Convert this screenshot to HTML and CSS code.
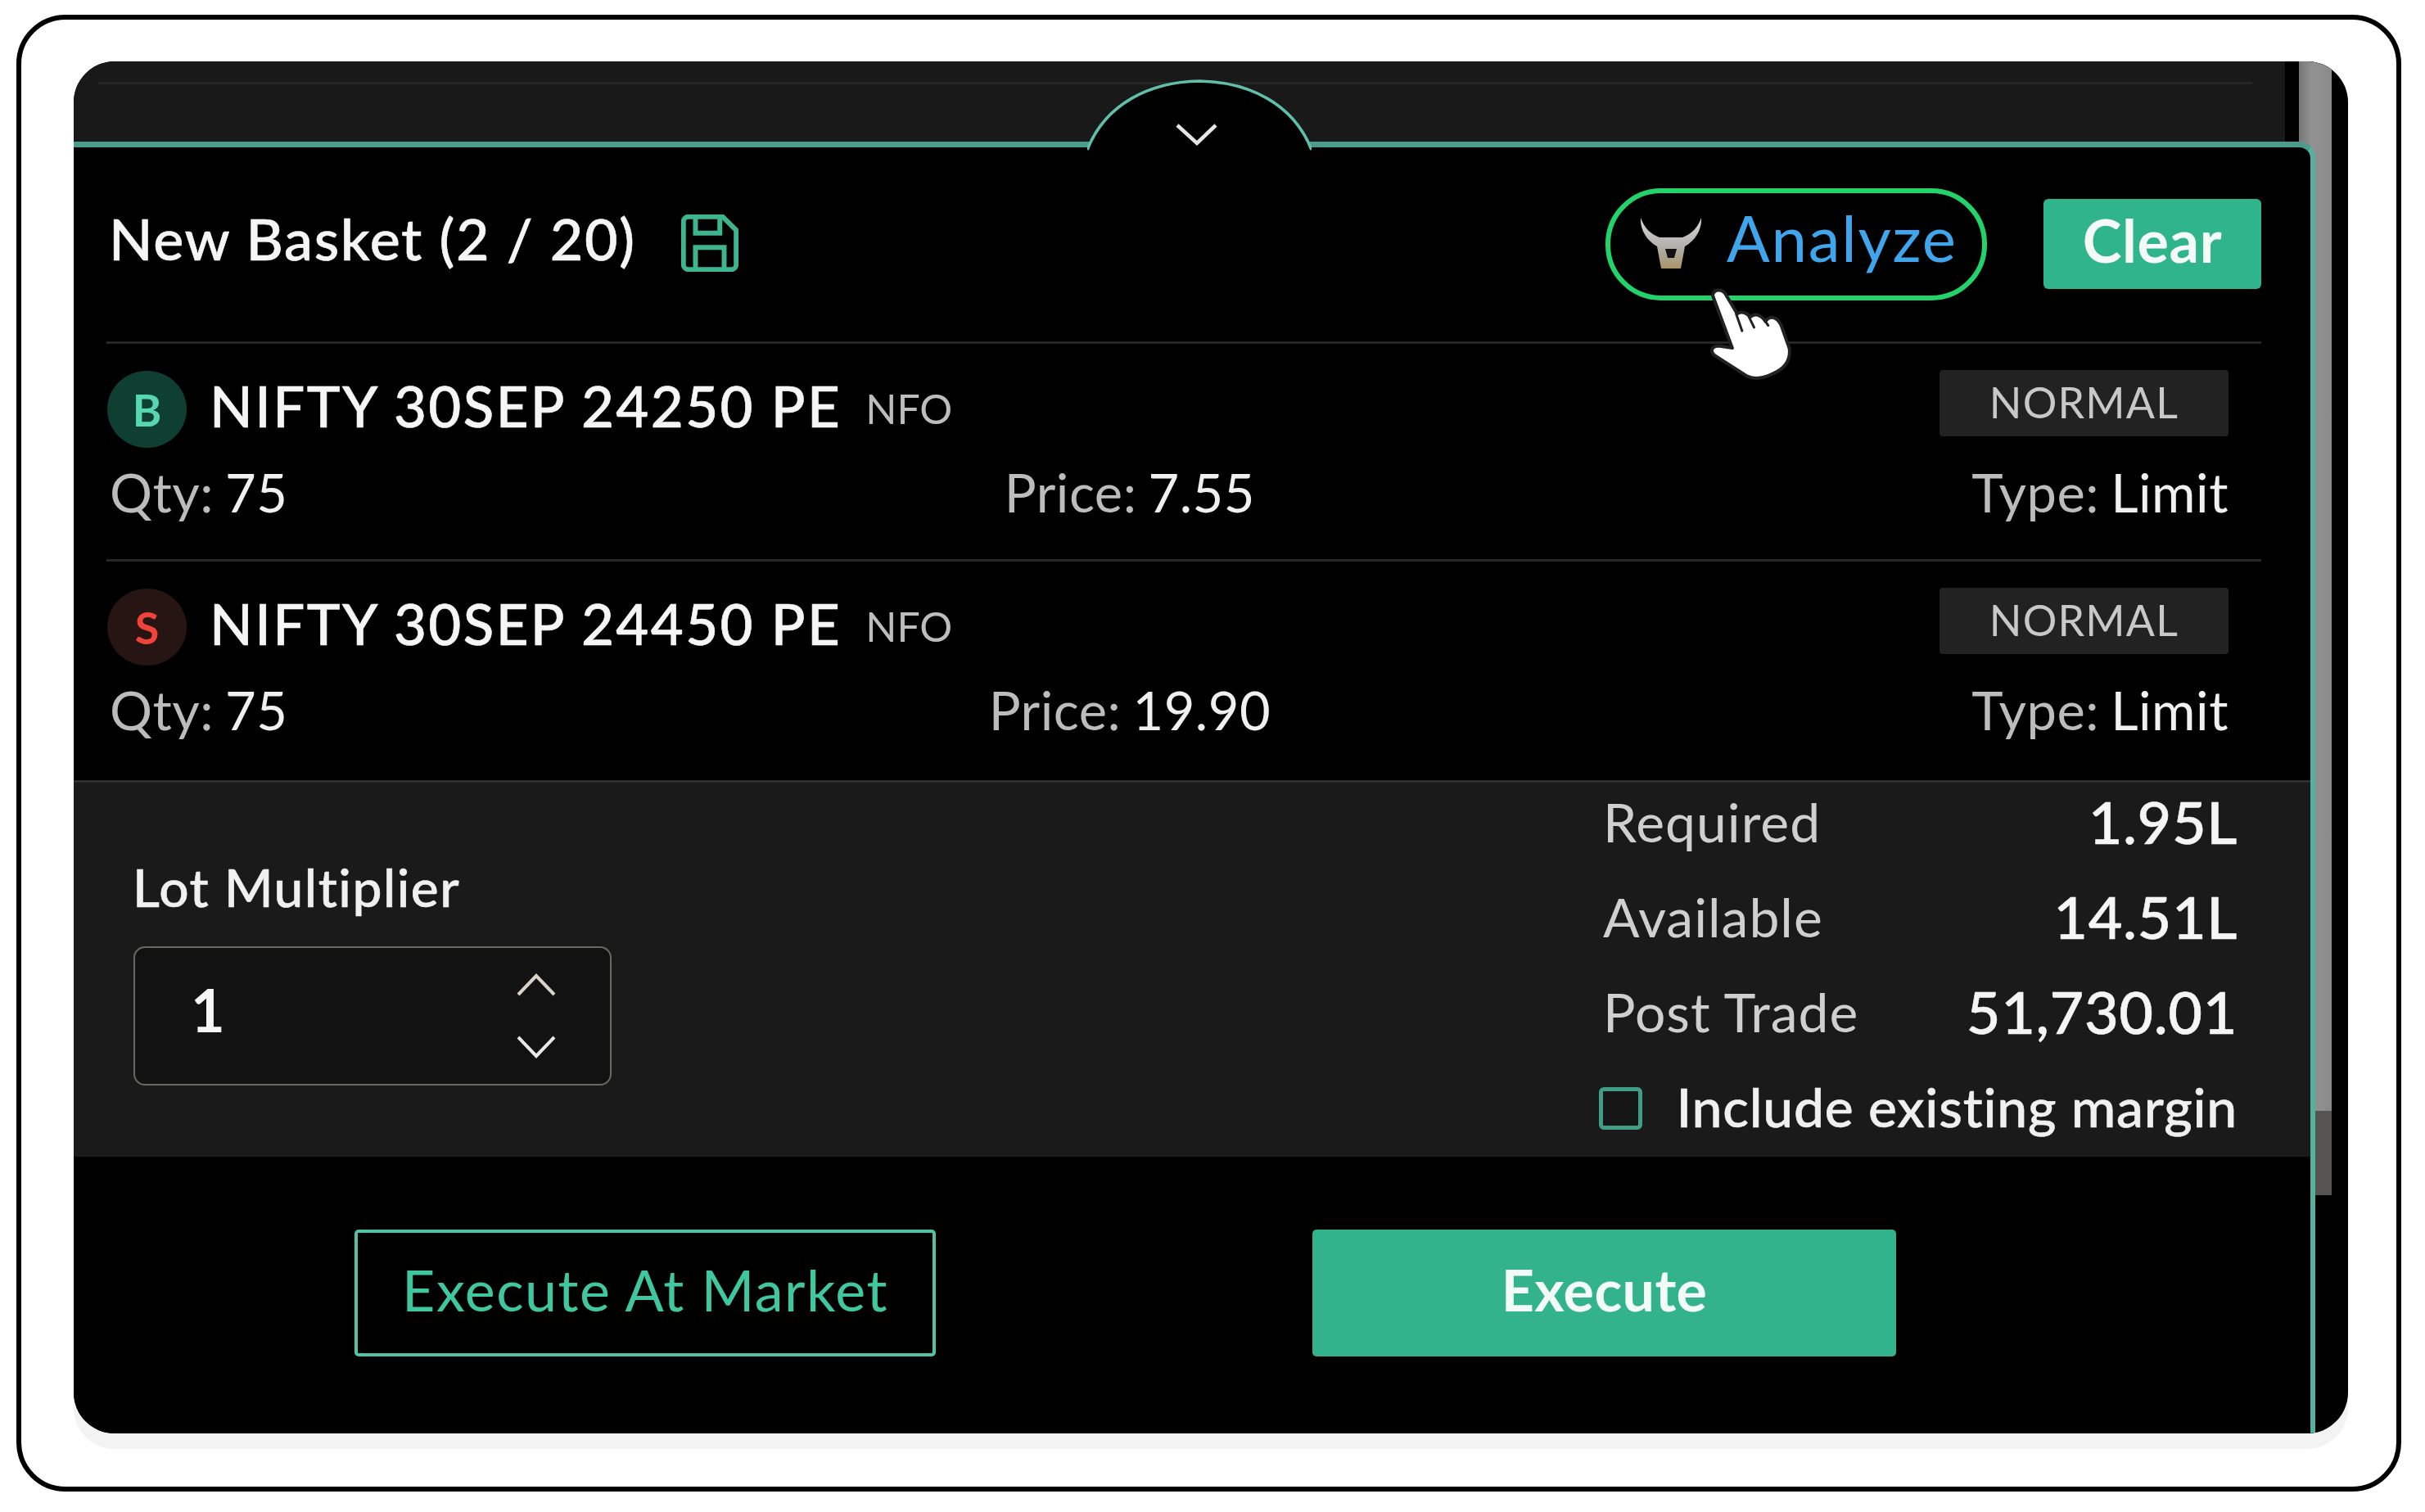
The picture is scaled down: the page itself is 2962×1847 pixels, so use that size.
FILE: index.html
```html
<!DOCTYPE html>
<html lang="en">

<head>
	<meta charset="UTF-8">
	<title>New Basket</title>
	<link rel="stylesheet" href="styles.css">
</head>

<body>
	<div class="frame">
		<div class="card">
			<div class="stage">
				<div class="strip"><div class="strip-line"></div></div>
				<div class="basket">
					<svg class="hump" viewBox="0 0 274 90" width="274" height="90">
						<path d="M0 84 C22 30 76 3 137 2 C198 3 252 30 274 84 V90 H0 Z" fill="#000" />
						<path d="M0 86 C22 30 76 3 137 2 C198 3 252 30 274 86" fill="none" stroke="#5fbfa9" stroke-width="3.5" />
						<path d="M110 56 L134 78 L157 56" fill="none" stroke="#e6e6e6" stroke-width="4.5" />
					</svg>
					<div class="list">
						<div class="head">
							<div class="head-left">
								<span class="title">New Basket (2 / 20)</span>
								<svg class="save" viewBox="2 2 20 20" width="70" height="70" fill="none" stroke="#3fb58f" stroke-width="1.7">
									<path d="M19.500 21.200H4.500a1.700 1.700 0 0 1-1.700-1.700V4.500a1.700 1.700 0 0 1 1.700-1.700H16.500l4.700 4.700v12a1.700 1.700 0 0 1-1.700 1.700z" />
									<path d="M17 21V13.500H7V21" />
									<path d="M7 3V8.500H15.500V3" />
								</svg>
							</div>
							<div class="head-right">
								<div class="pill">
									<svg class="bull" viewBox="0 0 76 64" width="76" height="64">
										<defs>
											<linearGradient id="bullfill" x1="0" y1="0" x2="0" y2="1">
												<stop offset="0" stop-color="#d8d8d6" />
												<stop offset="0.6" stop-color="#b0aeaa" />
												<stop offset="1" stop-color="#a89468" />
											</linearGradient>
										</defs>
										<path d="M1 0 C5 12 13 20 24 24 H52 C63 20 71 12 75 0 C76 14 68 28 55 35 L50 62 H26 L21 35 C8 28 0 14 1 0 Z" fill="url(#bullfill)" />
										<path d="M31 38 H45 L42 49 H34 Z" fill="#111" />
									</svg>
									<span class="analyze">Analyze</span>
									<svg class="hand" viewBox="380 390 310 350" width="103" height="117">
										<path d="M398 425 C400 402 432 398 445 420 L488 492 C505 482 525 488 535 505 C552 488 575 495 592 520 C610 495 635 505 650 535 L680 620 C685 665 660 695 620 712 C590 728 555 735 525 722 L405 645 C385 628 398 610 420 610 L470 618 Z" fill="#fff" stroke="#222" stroke-width="12" stroke-linejoin="round" />
										<path d="M484 492 L506 555 M532 505 L550 542 M590 518 L602 535" fill="none" stroke="#222" stroke-width="9" stroke-linecap="round" />
									</svg>
								</div>
								<div class="clear">Clear</div>
							</div>
						</div>

						<div class="order">
							<div class="order-top">
								<span class="side side-buy">B</span>
								<span class="symbol">NIFTY 30SEP 24250 PE</span>
								<span class="exchange">NFO</span>
								<span class="tag">NORMAL</span>
							</div>
							<div class="order-info">
								<span class="info">Qty: <b>75</b></span>
								<span class="info">Price: <b>7.55</b></span>
								<span class="info">Type: <b>Limit</b></span>
							</div>
						</div>

						<div class="order order-last">
							<div class="order-top">
								<span class="side side-sell">S</span>
								<span class="symbol">NIFTY 30SEP 24450 PE</span>
								<span class="exchange">NFO</span>
								<span class="tag">NORMAL</span>
							</div>
							<div class="order-info">
								<span class="info">Qty: <b>75</b></span>
								<span class="info">Price: <b>19.90</b></span>
								<span class="info">Type: <b>Limit</b></span>
							</div>
						</div>
					</div>

					<div class="summary">
						<div class="lots">
							<div class="lots-label">Lot Multiplier</div>
							<div class="stepper">
								<span class="stepper-value">1</span>
								<div class="stepper-arrows">
									<svg viewBox="0 0 48 28" width="48" height="28" fill="none" stroke="#d8d2c8" stroke-width="4"><path d="M2 26 L24 3 L46 26" /></svg>
									<svg viewBox="0 0 48 28" width="48" height="28" fill="none" stroke="#e8e8e8" stroke-width="4"><path d="M2 2 L24 25 L46 2" /></svg>
								</div>
							</div>
						</div>
						<div class="margins">
							<div class="margin-row"><span class="margin-label">Required</span><span class="margin-value">1.95L</span></div>
							<div class="margin-row"><span class="margin-label">Available</span><span class="margin-value">14.51L</span></div>
							<div class="margin-row"><span class="margin-label">Post Trade</span><span class="margin-value">51,730.01</span></div>
							<div class="margin-row">
								<span class="checkbox"></span>
								<span class="include">Include existing margin</span>
							</div>
						</div>
					</div>

					<div class="actions">
						<div class="btn btn-outline">Execute At Market</div>
						<div class="btn btn-solid">Execute</div>
					</div>
				</div>
			</div>
			<div class="scrollbar">
				<div class="thumb"></div>
				<div class="thumb-end"></div>
			</div>
		</div>
	</div>
</body>

</html>
```

FILE: styles.css
```css
* {
	margin: 0;
	padding: 0;
	box-sizing: border-box;
}

html,
body {
	width: 2962px;
	height: 1847px;
	background: #fff;
	font-family: Lato, 'Noto Sans', sans-serif;
	overflow: hidden;
}

.frame {
	width: 2913px;
	height: 1804px;
	margin: 18px 0 0 20px;
	padding: 51px 0 0 64px;
	border: 6px solid #000;
	border-radius: 60px;
}

.card {
	display: flex;
	width: 2778px;
	height: 1676px;
	padding-right: 19px;
	background: #000;
	border-radius: 50px;
	box-shadow: 0 19px 0 #f4f3f4;
	overflow: hidden;
}

.stage {
	display: flex;
	flex-direction: column;
	width: 2718px;
}

.strip {
	height: 98px;
	margin-right: 17px;
	padding: 25px 40px 0 30px;
	background: #191919;
}

.strip-line {
	height: 3px;
	background: #262626;
}

.basket {
	position: relative;
	z-index: 1;
	flex: 1;
	margin-right: -20px;
	background: #000;
	border-top: 7px solid #4b9c8c;
	border-right: 6px solid #55b09c;
	border-top-right-radius: 20px;
	display: flex;
	flex-direction: column;
}

.hump {
	position: absolute;
	left: 1238px;
	top: -83px;
}

.list {
	padding: 0 60px 0 40px;
}

.head {
	display: flex;
	justify-content: space-between;
	align-items: center;
	height: 240px;
	padding: 0 0 5px 3px;
	border-bottom: 3px solid #262626;
}

.head-left {
	display: flex;
	align-items: center;
	gap: 55px;
}

.title {
	margin-bottom: 10px;
	font-size: 70px;
	font-weight: 500;
	letter-spacing: 1.7px;
	color: #f5f5f5;
	-webkit-text-stroke: 0.6px #f5f5f5;
}

.save {
	margin-top: 2px;
}

.head-right {
	display: flex;
	align-items: center;
	gap: 69px;
	padding-top: 4px;
}

.pill {
	position: relative;
	display: flex;
	align-items: center;
	gap: 30px;
	width: 466px;
	height: 137px;
	padding-left: 36px;
	border: 6px solid #22d36b;
	border-radius: 68px;
}

.analyze {
	margin-bottom: 16px;
	font-size: 78px;
	letter-spacing: 1.8px;
	color: #3fa5ec;
}

.hand {
	position: absolute;
	left: 119px;
	top: 113px;
}

.clear {
	display: flex;
	align-items: center;
	justify-content: center;
	width: 266px;
	height: 110px;
	padding-bottom: 10px;
	background: #2fb48c;
	border-radius: 6px;
	font-size: 72px;
	font-weight: 700;
	letter-spacing: 0.6px;
	color: #f4fbf6;
}

.order {
	height: 266px;
	padding: 34px 40px 0 1px;
	border-bottom: 3px solid #262626;
}

.order-last {
	height: 267px;
	border-bottom: 0;
}

.order-top {
	display: flex;
	align-items: center;
	height: 92px;
	margin-bottom: 5px;
}

.side {
	display: flex;
	align-items: center;
	justify-content: center;
	width: 97px;
	height: 94px;
	border-radius: 50%;
	font-size: 54px;
	font-weight: 700;
}

.side-buy {
	background: #0e3f30;
	color: #56d6b2;
}

.side-sell {
	background: #261513;
	color: #f0443a;
}

.symbol {
	margin: 0 0 10px 28px;
	font-size: 69px;
	font-weight: 500;
	letter-spacing: 2.4px;
	color: #f5f5f5;
	-webkit-text-stroke: 0.6px #f5f5f5;
}

.exchange {
	margin: -2px 0 0 29px;
	font-size: 50px;
	color: #bdbdbd;
}

.tag {
	display: flex;
	align-items: center;
	justify-content: center;
	width: 353px;
	height: 81px;
	margin: -16px 0 0 auto;
	padding-bottom: 2px;
	background: #222;
	border-radius: 4px;
	font-size: 52px;
	letter-spacing: 1.2px;
	color: #c8c8c8;
}

.order-info {
	display: flex;
	justify-content: space-between;
	height: 100px;
	padding-left: 3px;
	line-height: 100px;
}

.info {
	font-size: 65px;
	letter-spacing: 0.5px;
	word-spacing: -3px;
	color: #bcbcbc;
}

.info b {
	font-weight: 400;
	color: #f0f0f0;
}

.summary {
	display: flex;
	justify-content: space-between;
	height: 460px;
	padding: 0 89px 0 72px;
	background: #1a1a1a;
	border-top: 3px solid #2e2e2e;
}

.lots {
	padding-top: 88px;
}

.lots-label {
	height: 112px;
	font-size: 64px;
	font-weight: 500;
	letter-spacing: 1.5px;
	color: #f0f0f0;
	line-height: 80px;
	-webkit-text-stroke: 0.6px #f0f0f0;
}

.stepper {
	display: flex;
	justify-content: space-between;
	align-items: center;
	width: 584px;
	height: 170px;
	margin-left: 1px;
	padding: 0 66px 0 68px;
	background: #121212;
	border: 2px solid #6a6860;
	border-radius: 14px;
}

.stepper-value {
	margin-bottom: 16px;
	font-size: 72px;
	font-weight: 700;
	color: #f5f5f5;
}

.stepper-arrows {
	display: flex;
	flex-direction: column;
	gap: 48px;
}

.margins {
	width: 775px;
	margin-top: -11px;
}

.margin-row {
	display: flex;
	align-items: center;
	justify-content: space-between;
	height: 116px;
}

.margin-label {
	font-size: 66px;
	letter-spacing: 1px;
	color: #cfcfcf;
}

.margin-value {
	font-size: 72px;
	font-weight: 500;
	letter-spacing: 0.6px;
	color: #f5f5f5;
	-webkit-text-stroke: 0.6px #f5f5f5;
}

.checkbox {
	width: 53px;
	height: 52px;
	margin: 5px 0 0 -5px;
	background: #161616;
	border: 5px solid #3f9e85;
	border-radius: 6px;
}

.include {
	font-size: 66px;
	font-weight: 500;
	letter-spacing: 0.8px;
	color: #f0f0f0;
	-webkit-text-stroke: 0.6px #f0f0f0;
}

.actions {
	display: flex;
	gap: 460px;
	padding: 89px 0 0 343px;
}

.btn {
	display: flex;
	align-items: center;
	justify-content: center;
	height: 155px;
	padding-bottom: 10px;
	border-radius: 5px;
	font-size: 70px;
}

.btn-outline {
	width: 710px;
	border: 4px solid #4fc3a5;
	letter-spacing: 1.5px;
	color: #3fc79f;
}

.btn-solid {
	width: 713px;
	background: #33b38c;
	font-weight: 700;
	letter-spacing: 0.4px;
	color: #f2fbf6;
}

.scrollbar {
	display: flex;
	flex-direction: column;
	width: 40px;
	background: #000;
}

.thumb {
	height: 1282px;
	background: linear-gradient(90deg, #777, #929292 40%, #8a8a8a);
}

.thumb-end {
	height: 103px;
	background: #565452;
}
```
